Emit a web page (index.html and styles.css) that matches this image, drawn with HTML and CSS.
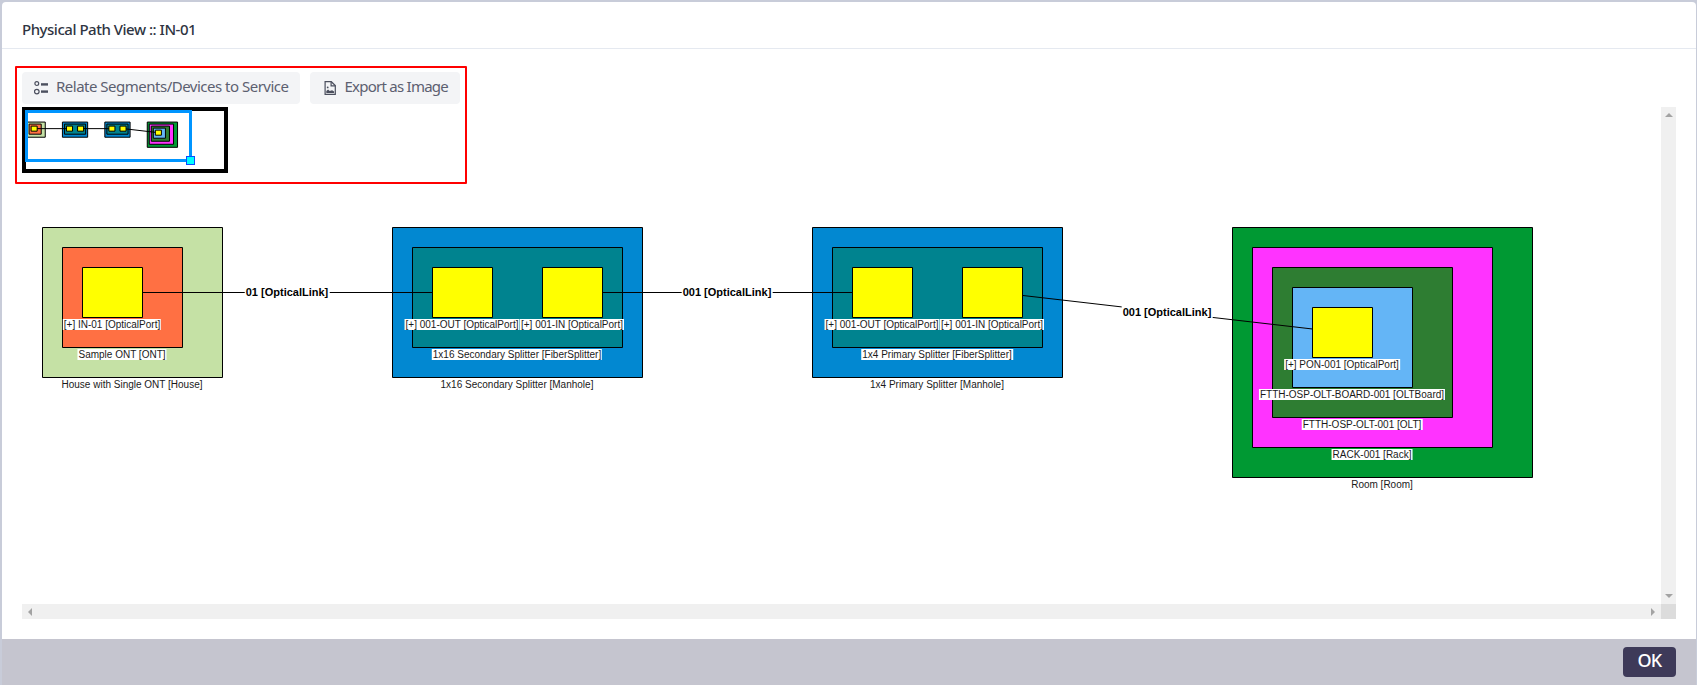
FILE: index.html
```html
<!DOCTYPE html>
<html lang="en">
<head>
  <meta charset="UTF-8" />
  <title>Physical Path View</title>
  <link rel="stylesheet" href="styles.css">
</head>
<body>

  <div class="dialog">
    <div class="dialog-header">Physical Path View :: IN-01</div>

    <div class="dialog-body">
      <div class="toolbar">
        <button class="tool-btn">
          <svg class="tool-icon" width="14" height="14" viewBox="0 0 14 14">
            <circle cx="2.8" cy="2.6" r="1.9" class="icon-ring"/>
            <circle cx="2.8" cy="10.6" r="2.3" class="icon-ring"/>
            <rect x="7" y="2.2" width="7" height="2.4" class="icon-fill"/>
            <rect x="7" y="9.4" width="7" height="2.4" class="icon-fill"/>
          </svg>
          <span class="tool-text">Relate Segments/Devices to Service</span>
        </button>
        <button class="tool-btn export-btn">
          <svg class="tool-icon" width="14" height="14" viewBox="-2.5 0 14 14">
            <path d="M.6 .7h6.2L10.8 4.6V13.3H.6Z" class="icon-ring"/>
            <path d="M6.6 .7V4.8h4.2" class="icon-ring"/>
            <path d="M1.8 12V10L3.6 8.4 5.2 10 7.6 9.2 9.6 10.4V12Z" class="icon-fill"/>
            <circle cx="3.2" cy="6.4" r=".9" class="icon-fill"/>
          </svg>
          <span class="tool-text">Export as Image</span>
        </button>
      </div>

      <div class="viewer">
        <div class="canvas">
          <svg class="diagram" width="1639" height="497">
            <g id="shapes">
              <!-- House -->
              <rect x="20.5" y="120.5" width="180" height="150" class="shape house"/>
              <rect x="40.5" y="140.5" width="120" height="100" class="shape ont"/>
              <rect x="60.5" y="160.5" width="60" height="50" class="shape port"/>
              <!-- Secondary splitter -->
              <rect x="370.5" y="120.5" width="250" height="150" class="shape manhole"/>
              <rect x="390.5" y="140.5" width="210" height="100" class="shape splitter"/>
              <rect x="410.5" y="160.5" width="60" height="50" class="shape port"/>
              <rect x="520.5" y="160.5" width="60" height="50" class="shape port"/>
              <!-- Primary splitter -->
              <rect x="790.5" y="120.5" width="250" height="150" class="shape manhole"/>
              <rect x="810.5" y="140.5" width="210" height="100" class="shape splitter"/>
              <rect x="830.5" y="160.5" width="60" height="50" class="shape port"/>
              <rect x="940.5" y="160.5" width="60" height="50" class="shape port"/>
              <!-- Room -->
              <rect x="1210.5" y="120.5" width="300" height="250" class="shape room"/>
              <rect x="1230.5" y="140.5" width="240" height="200" class="shape rack"/>
              <rect x="1250.5" y="160.5" width="180" height="150" class="shape olt"/>
              <rect x="1270.5" y="180.5" width="120" height="100" class="shape board"/>
              <rect x="1290.5" y="200.5" width="60" height="50" class="shape port"/>
              <!-- Links -->
              <line x1="120.5" y1="185.5" x2="410.5" y2="185.5" class="link"/>
              <line x1="580.5" y1="185.5" x2="830.5" y2="185.5" class="link"/>
              <line x1="1001" y1="188.5" x2="1290.5" y2="222" class="link"/>
            </g>
          </svg>

          <span class="label lbl-in01">[+] IN-01 [OpticalPort]</span>
          <span class="label lbl-ont">Sample ONT [ONT]</span>
          <span class="label plain lbl-house">House with Single ONT [House]</span>

          <span class="label lbl-a-out">[+] 001-OUT [OpticalPort]</span>
          <span class="label lbl-a-in">[+] 001-IN [OpticalPort]</span>
          <span class="label lbl-a-fs">1x16 Secondary Splitter [FiberSplitter]</span>
          <span class="label plain lbl-a-mh">1x16 Secondary Splitter [Manhole]</span>

          <span class="label lbl-b-out">[+] 001-OUT [OpticalPort]</span>
          <span class="label lbl-b-in">[+] 001-IN [OpticalPort]</span>
          <span class="label lbl-b-fs">1x4 Primary Splitter [FiberSplitter]</span>
          <span class="label plain lbl-b-mh">1x4 Primary Splitter [Manhole]</span>

          <span class="label lbl-pon">[+] PON-001 [OpticalPort]</span>
          <span class="label lbl-board">FTTH-OSP-OLT-BOARD-001 [OLTBoard]</span>
          <span class="label lbl-olt">FTTH-OSP-OLT-001 [OLT]</span>
          <span class="label lbl-rack">RACK-001 [Rack]</span>
          <span class="label plain lbl-room">Room [Room]</span>

          <span class="label link-label lbl-link1">01 [OpticalLink]</span>
          <span class="label link-label lbl-link2">001 [OpticalLink]</span>
          <span class="label link-label lbl-link3">001 [OpticalLink]</span>

          <!-- Outline -->
          <div class="minimap">
            <svg width="198" height="58">
              <use href="#shapes" transform="translate(-1 -1.1) scale(0.101)"/>
              <rect x="113.5" y="16" width="2" height="3" class="gap"/>
              <rect x="0.5" y="0.5" width="164" height="49" class="outline"/>
              <rect x="160.5" y="45.5" width="8" height="8" class="outline-handle"/>
            </svg>
          </div>
        </div>

        <div class="scroll-v">
          <span class="arrow arrow-up"></span>
          <span class="arrow arrow-down"></span>
        </div>
        <div class="scroll-h">
          <span class="arrow arrow-left"></span>
          <span class="arrow arrow-right"></span>
        </div>
        <div class="scroll-corner"></div>
      </div>

      <!-- Red highlight round the tools -->
      <div class="highlight"></div>
    </div>

    <div class="dialog-footer">
      <button class="ok-btn">OK</button>
    </div>
  </div>

</body>
</html>
```

FILE: styles.css
```css
html, body {
  height: 100%;
}

body {
  margin: 0;
  padding: 2px 1px 0 2px;
  box-sizing: border-box;
  background-color: #c8ccd9;
  overflow: hidden;
  font-family: "Noto Sans", sans-serif;
}

.dialog {
  height: 100%;
  display: flex;
  flex-direction: column;
  background-color: #fff;
  border-radius: 4px 4px 0 0;
}

.dialog-header {
  height: 47px;
  box-sizing: border-box;
  flex: none;
  display: flex;
  align-items: center;
  padding: 8px 20px 0;
  border-bottom: 1px solid #e5e9f0;
  color: #2f3542;
  font-size: 15px;
  font-weight: 500;
  letter-spacing: -0.48px;
}

.dialog-body {
  flex: 1;
  min-height: 0;
  position: relative;
  display: flex;
  flex-direction: column;
  gap: 3px;
  padding: 23px 20px 20px;
}

.toolbar {
  flex: none;
  display: flex;
  gap: 10px;
}

.tool-btn {
  height: 32px;
  display: flex;
  align-items: center;
  gap: 8px;
  padding: 0 12px;
  border: none;
  border-radius: 4px;
  background-color: #f3f4f6;
  color: #5c6070;
  font-family: "Noto Sans", sans-serif;
  font-size: 15px;
  letter-spacing: -0.5px;
  cursor: pointer;
}

.export-btn {
  letter-spacing: -0.75px;
}

.tool-text {
  margin-bottom: 4px;
}

.icon-ring {
  fill: none;
  stroke: #4b4f5e;
  stroke-width: 1.2;
}

.icon-fill {
  fill: #4b4f5e;
}

.viewer {
  flex: 1;
  min-height: 0;
  display: grid;
  grid-template-columns: 1fr 15px;
  grid-template-rows: 1fr 15px;
}

.canvas {
  position: relative;
  overflow: hidden;
}

.diagram {
  display: block;
}

.shape {
  stroke: #000;
  stroke-width: 1;
  vector-effect: non-scaling-stroke;
}

.house { fill: #c5e1a5; }
.ont { fill: #ff7043; }
.port { fill: #ffff00; }
.manhole { fill: #0288d1; }
.splitter { fill: #00838f; }
.room { fill: #009933; }
.rack { fill: #ff33ff; }
.olt { fill: #2e7d32; }
.board { fill: #64b5f6; }

.link {
  stroke: #000;
  stroke-width: 1;
  vector-effect: non-scaling-stroke;
}

.label {
  position: absolute;
  transform: translateX(-50%);
  padding: 0 1px;
  background-color: #fff;
  color: #1a1a1a;
  font-family: "Liberation Sans", Arial, sans-serif;
  font-size: 10px;
  line-height: 11px;
  white-space: nowrap;
}

.label.plain {
  background-color: transparent;
}

.link-label {
  color: #000;
  font-size: 11px;
  font-weight: bold;
  line-height: 13px;
}

.lbl-in01 { left: 90px; top: 212px; }
.lbl-ont { left: 100px; top: 242px; }
.lbl-house { left: 110px; top: 272px; }

.lbl-a-out { left: 440px; top: 212px; }
.lbl-a-in { left: 550px; top: 212px; }
.lbl-a-fs { left: 495px; top: 242px; }
.lbl-a-mh { left: 495px; top: 272px; }

.lbl-b-out { left: 860px; top: 212px; }
.lbl-b-in { left: 970px; top: 212px; }
.lbl-b-fs { left: 915px; top: 242px; }
.lbl-b-mh { left: 915px; top: 272px; }

.lbl-pon { left: 1320px; top: 252px; }
.lbl-board { left: 1330px; top: 282px; }
.lbl-olt { left: 1340px; top: 312px; }
.lbl-rack { left: 1350px; top: 342px; }
.lbl-room { left: 1360px; top: 372px; }

.lbl-link1 { left: 265px; top: 179px; }
.lbl-link2 { left: 705px; top: 179px; }
.lbl-link3 { left: 1145px; top: 199px; }

.minimap {
  position: absolute;
  left: 0;
  top: 0;
  width: 198px;
  height: 58px;
  border: 4px solid #000;
  background-color: #fff;
}

.minimap svg {
  display: block;
  overflow: visible;
}

.gap {
  fill: #fff;
}

.outline {
  fill: none;
  stroke: #0095ff;
  stroke-width: 3;
}

.outline-handle {
  fill: #00ffff;
  stroke: #0a4cff;
  stroke-width: 1;
}

.scroll-v {
  display: flex;
  flex-direction: column;
  justify-content: space-between;
  align-items: center;
  padding: 6px 0;
  background-color: #f0f0f0;
}

.scroll-h {
  display: flex;
  justify-content: space-between;
  align-items: center;
  padding: 0 6px;
  background-color: #f0f0f0;
}

.scroll-corner {
  background-color: #dcdcdc;
}

.arrow {
  width: 0;
  height: 0;
  border-style: solid;
  border-color: transparent;
}

.arrow-up {
  border-width: 0 4px 4px;
  border-bottom-color: #a3a3a3;
}

.arrow-down {
  border-width: 4px 4px 0;
  border-top-color: #a3a3a3;
}

.arrow-left {
  border-width: 4px 4px 4px 0;
  border-right-color: #a3a3a3;
}

.arrow-right {
  border-width: 4px 0 4px 4px;
  border-left-color: #a3a3a3;
}

.highlight {
  position: absolute;
  left: 13px;
  top: 17px;
  width: 448px;
  height: 114px;
  border: 2px solid #ff0000;
  border-radius: 1px;
  pointer-events: none;
}

.dialog-footer {
  height: 46px;
  flex: none;
  display: flex;
  justify-content: flex-end;
  align-items: center;
  padding-right: 20px;
  background-color: #c5c5cf;
}

.ok-btn {
  width: 53px;
  height: 30px;
  padding: 0 0 4px;
  border: none;
  border-radius: 4px;
  background-color: #3e3a59;
  color: #fff;
  font-family: "Noto Sans", sans-serif;
  font-size: 18px;
  font-weight: 500;
  letter-spacing: -0.8px;
  cursor: pointer;
}
```
